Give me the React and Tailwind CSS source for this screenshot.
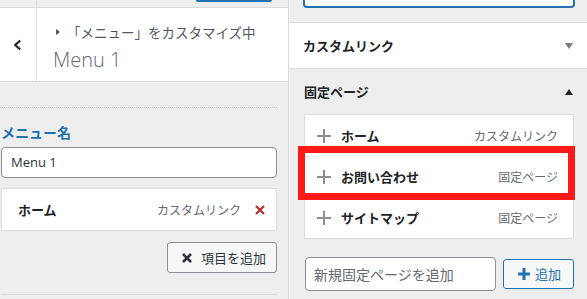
import React from "react";

const jp = { fontFamily: '"Noto Sans CJK JP", "Noto Sans", sans-serif' };
const latin = { fontFamily: '"Open Sans", "Noto Sans CJK JP", sans-serif' };

function Plus({ className = "" }) {
  return (
    <svg viewBox="0 0 14 14" className={className}>
      <path d="M7 0v14M0 7h14" stroke="currentColor" strokeWidth="2" />
    </svg>
  );
}

function PageRow({ title, type, first }) {
  return (
    <div className={`flex items-center h-[41px] pl-[12px] pr-[15px] ${first ? "" : "border-t border-[#f0f0f1]"}`}>
      <Plus className="w-[14px] h-[14px] text-[#8c8f94]" />
      <span className="ml-[10px] text-[13px] font-bold text-[#1d2327]">{title}</span>
      <span className="ml-auto text-[12px] text-[#646970]">{type}</span>
    </div>
  );
}

export default function App() {
  return (
    <div className="flex w-[587px] h-[299px] overflow-hidden bg-[#eeeeee]" style={jp}>
      {/* 左パネル */}
      <div className="w-[289px] shrink-0 border-r border-[#dcdcde] flex flex-col">
        <div className="h-[8px] border-b border-[#dcdcde] flex">
          <div className="w-[37px] border-r border-[#dcdcde]" />
          <div className="ml-[159px] w-[76px] h-[2px] bg-[#2271b1] rounded-b-[2px]" />
        </div>
        <div className="h-[74px] bg-white border-b border-[#dcdcde] flex">
          <div className="w-[37px] border-r border-[#dcdcde] flex items-center justify-center">
            <svg viewBox="0 0 10 12" className="w-[9px] h-[12px] -ml-[2px]">
              <path d="M8 1L2.5 6L8 11" fill="none" stroke="#1d2327" strokeWidth="2.4" />
            </svg>
          </div>
          <div className="pl-[16px] pt-[14px]">
            <div className="flex items-center text-[13.5px] leading-[20px] text-[#50575e]">
              <svg viewBox="0 0 4 6" className="w-[4px] h-[6px] ml-[3px] mr-[7px]">
                <path d="M0 0L4 3L0 6Z" fill="#50575e" />
              </svg>
              「メニュー」をカスタマイズ中
            </div>
            <div className="mt-[5px] text-[20px] leading-[26px] font-light text-[#646970]" style={latin}>
              Menu 1
            </div>
          </div>
        </div>

        <div className="mt-[25px] mr-[11px] border-t border-dotted border-[#c3c4c7] pl-[1px]">
          <div className="mt-[14px] text-[14px] leading-[20px] font-bold text-[#2271b1]">メニュー名</div>
          <div className="mt-[5px] h-[31px] bg-white border border-[#8c8f94] rounded-[4px] flex items-center px-[9px] text-[13px] text-[#2c3338]" style={latin}>
            Menu 1
          </div>
          <div className="mt-[10px] h-[43px] bg-white border border-[#dcdcde] flex items-center pl-[16px] pr-[11px]">
            <span className="text-[13px] font-bold text-[#1d2327]">ホーム</span>
            <span className="ml-auto text-[12px] text-[#646970]">カスタムリンク</span>
            <svg viewBox="0 0 10 10" className="w-[10px] h-[10px] ml-[14px]">
              <path d="M1 1L9 9M9 1L1 9" stroke="#b32d2e" strokeWidth="2.2" />
            </svg>
          </div>
          <div className="mt-[11px] flex justify-end">
            <div className="w-[110px] h-[31px] bg-[#f6f7f7] border border-[#8c8f94] rounded-[3px] flex items-center pl-[14px] text-[13px] text-[#2c3338]">
              <svg viewBox="0 0 10 10" className="w-[10px] h-[10px] mr-[9px]">
                <path d="M1 1L9 9M9 1L1 9" stroke="#2c3338" strokeWidth="2.6" />
              </svg>
              項目を追加
            </div>
          </div>
          <div className="mt-[21px] border-t border-[#dcdcde]" />
        </div>
      </div>

      {/* 右パネル */}
      <div className="flex-1 flex flex-col">
        <div className="h-[23px] border-b border-[#dcdcde] overflow-hidden pl-[14px] pr-[12px]">
          <div className="-mt-[22px] h-[30px] bg-white border-2 border-[#2271b1] rounded-[4px]" />
        </div>
        <div className="h-[46px] bg-white border-b border-[#dcdcde] flex items-center pl-[14px] pr-[14px]">
          <span className="text-[13px] font-bold text-[#1d2327]">カスタムリンク</span>
          <svg viewBox="0 0 8 6" className="ml-auto w-[8px] h-[6px]">
            <path d="M0 0H8L4 6Z" fill="#787c82" />
          </svg>
        </div>
        <div className="h-[45px] flex items-center pl-[15px] pr-[14px]">
          <span className="text-[13px] font-bold text-[#1d2327]">固定ページ</span>
          <svg viewBox="0 0 8 6" className="ml-auto w-[8px] h-[6px]">
            <path d="M0 6H8L4 0Z" fill="#1d2327" />
          </svg>
        </div>
        <div className="ml-[15px] mr-[13px] relative bg-white border border-[#dcdcde]">
          <PageRow title="ホーム" type="カスタムリンク" first />
          <PageRow title="お問い合わせ" type="固定ページ" />
          <PageRow title="サイトマップ" type="固定ページ" />
          <div className="absolute left-[-7px] right-[-2px] top-[31px] h-[54px] border-[7px] border-[#ff1a1a]" />
        </div>
        <div className="mt-[18px] ml-[16px] mr-[13px] flex items-center">
          <div className="w-[191px] h-[34px] bg-white border border-[#8c8f94] rounded-[4px] flex items-center pl-[8px] text-[14px] text-[#646970]">
            新規固定ページを追加
          </div>
          <div className="ml-auto w-[71px] h-[30px] bg-[#f6f7f7] border border-[#2271b1] rounded-[3px] flex items-center pl-[14px] text-[13px] text-[#2271b1]">
            <svg viewBox="0 0 12 12" className="w-[12px] h-[12px] mr-[5px]">
              <path d="M6 0v12M0 6h12" stroke="#2271b1" strokeWidth="3" />
            </svg>
            追加
          </div>
        </div>
      </div>
    </div>
  );
}
